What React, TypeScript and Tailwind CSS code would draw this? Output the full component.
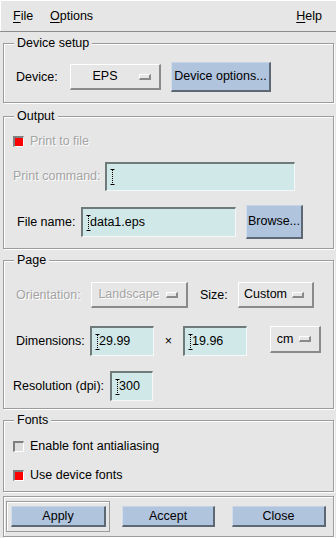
import type { ReactNode } from 'react';

const font = "font-['Liberation_Sans','Arial',sans-serif] text-[12.5px] leading-[15px] text-black";
const disabledText = 'text-[#a4a4a4] [text-shadow:1px_1px_0_#ffffff]';

function Frame({ title, className, children }: { title: string; className: string; children?: ReactNode }) {
  return (
    <div
      className={`ml-[3px] w-[331px] border border-[#9c9c9c] shadow-[1px_1px_0_#ffffff,inset_1px_1px_0_#ffffff] ${className}`}
    >
      <span className="-mt-[8px] ml-[10px] block w-fit bg-[#e6e6e6] px-[3px]">{title}</span>
      {children}
    </div>
  );
}

function Cursor() {
  return (
    <svg width="5" height="16" viewBox="0 0 5 16" className="shrink-0">
      <path d="M0.5 0.5h4M0.5 15.5h4" stroke="#000" strokeWidth="1" />
      <path d="M2.5 1v14" stroke="#000" strokeWidth="1" strokeDasharray="1 1" />
    </svg>
  );
}

function Entry({ value, className }: { value?: string; className: string }) {
  return (
    <div
      className={`flex items-center border-b border-l-2 border-r border-t-2 border-b-[#f4f8f8] border-l-[#6f7b7b] border-r-[#f4f8f8] border-t-[#6f7b7b] bg-[#d1e8e8] pl-[3px] ${className}`}
    >
      <Cursor />
      <span className="-ml-[1px]">{value}</span>
    </div>
  );
}

function Indicator() {
  return (
    <span className="block h-[6px] w-[12px] border-b-2 border-l border-r-2 border-t border-b-[#8a8a8a] border-l-white border-r-[#8a8a8a] border-t-white bg-[#e6e6e6]" />
  );
}

function Dropdown({ label, disabled, className }: { label: string; disabled?: boolean; className: string }) {
  return (
    <div
      className={`flex items-center border-b-2 border-l border-r-2 border-t border-b-[#8a8a8a] border-l-white border-r-[#8a8a8a] border-t-white bg-[#e6e6e6] ${className}`}
    >
      <span className={`flex-1 text-center ${disabled ? disabledText : ''}`}>{label}</span>
      <span className="mr-[8px]">
        <Indicator />
      </span>
    </div>
  );
}

function BlueButton({ label, className }: { label: string; className: string }) {
  return (
    <div
      className={`flex items-center justify-center border-b-2 border-l border-r-2 border-t border-b-[#5c6874] border-l-[#d3deec] border-r-[#5c6874] border-t-[#c6d4e6] bg-[#b0c4de] ${className}`}
    >
      {label}
    </div>
  );
}

function Check({ checked }: { checked: boolean }) {
  return (
    <span className="flex h-[11px] w-[11px] shrink-0 border-b border-l-2 border-r border-t-2 border-b-white border-l-[#7f7f7f] border-r-white border-t-[#7f7f7f]">
      <span className={`block h-full w-full ${checked ? 'bg-[#ff0000]' : 'bg-[#dedede]'}`} />
    </span>
  );
}

export default function App() {
  return (
    <div className={`h-[538px] w-[336px] overflow-hidden bg-[#e6e6e6] ${font}`}>
      <div className="flex h-[32px] items-center border-b border-b-[#8c8c8c] pl-[13px] pr-[14px] pt-[2px] shadow-[inset_1px_1px_0_#ffffff]">
        <span className="w-[37px]">
          <span className="underline underline-offset-2">F</span>ile
        </span>
        <span>
          <span className="underline underline-offset-2">O</span>ptions
        </span>
        <span className="ml-auto">
          <span className="underline underline-offset-2">H</span>elp
        </span>
      </div>

      <Frame title="Device setup" className="mt-[11px] h-[60px]">
        <div className="mt-[11px] flex h-[30px] items-center pl-[12px]">
          <span className="w-[54px]">Device:</span>
          <Dropdown label="EPS" className="h-[26px] w-[91px]" />
          <BlueButton label="Device options..." className="ml-[10px] h-[30px] w-[100px]" />
        </div>
      </Frame>

      <Frame title="Output" className="mt-[13px] h-[133px]">
        <div className="mt-[12px] flex h-[11px] items-center pl-[9px]">
          <Check checked />
          <span className={`ml-[6px] ${disabledText}`}>Print to file</span>
        </div>
        <div className="mt-[15px] flex h-[29px] items-center pl-[9px]">
          <span className={`w-[92px] ${disabledText}`}>Print command:</span>
          <Entry className="h-[29px] w-[190px]" />
        </div>
        <div className="mt-[14px] flex h-[34px] items-center pl-[13px]">
          <span className="w-[64px]">File name:</span>
          <Entry value="data1.eps" className="h-[30px] w-[155px]" />
          <BlueButton label="Browse..." className="ml-[10px] h-[34px] w-[57px]" />
        </div>
      </Frame>

      <Frame title="Page" className="mt-[11px] h-[149px]">
        <div className="mt-[14px] flex h-[26px] items-center pl-[12px]">
          <span className={`w-[75px] ${disabledText}`}>Orientation:</span>
          <Dropdown label="Landscape" disabled className="h-[26px] w-[97px]" />
          <span className="ml-[12px] w-[38px]">Size:</span>
          <Dropdown label="Custom" className="h-[26px] w-[76px]" />
        </div>
        <div className="mt-[18px] flex h-[30px] items-start pl-[12px]">
          <span className="w-[74px] self-center">Dimensions:</span>
          <Entry value="29.99" className="h-[30px] w-[64px]" />
          <span className="w-[29px] self-center text-center">×</span>
          <Entry value="19.96" className="h-[30px] w-[64px]" />
          <Dropdown label="cm" className="ml-[23px] h-[27px] w-[51px]" />
        </div>
        <div className="mt-[15px] flex h-[30px] items-center pl-[9px]">
          <span className="w-[97px]">Resolution (dpi):</span>
          <Entry value="300" className="h-[30px] w-[43px]" />
        </div>
      </Frame>

      <Frame title="Fonts" className="mt-[11px] h-[72px]">
        <div className="mt-[13px] flex h-[11px] items-center pl-[9px]">
          <Check checked={false} />
          <span className="ml-[6px]">Enable font antialiasing</span>
        </div>
        <div className="mt-[18px] flex h-[11px] items-center pl-[9px]">
          <Check checked />
          <span className="ml-[6px]">Use device fonts</span>
        </div>
      </Frame>

      <div className="ml-[3px] mt-[4px] flex h-[41px] w-[331px] items-center border border-[#9c9c9c] shadow-[1px_1px_0_#ffffff,inset_1px_1px_0_#ffffff]">
        <div className="ml-[2px] flex h-[31px] w-[104px] items-center border border-[#9c9c9c] pl-[4px] shadow-[inset_1px_1px_0_#ffffff]">
          <BlueButton label="Apply" className="h-[21px] w-[95px]" />
        </div>
        <BlueButton label="Accept" className="ml-[12px] h-[21px] w-[93px]" />
        <BlueButton label="Close" className="ml-[17px] h-[21px] w-[94px]" />
      </div>
    </div>
  );
}
